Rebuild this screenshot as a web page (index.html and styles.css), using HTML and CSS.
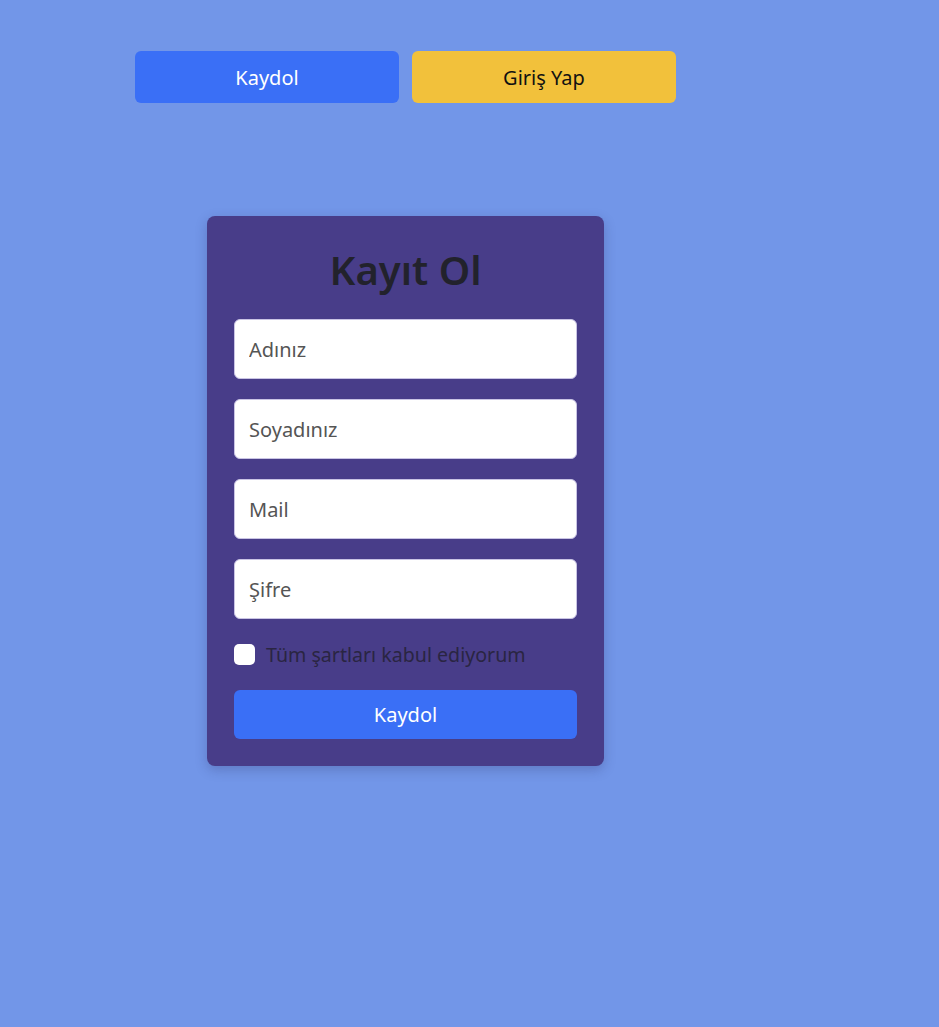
FILE: index.html
```html
<!DOCTYPE html>
<html lang="tr">
<head>
<meta charset="utf-8">
<title>Kayıt Ol</title>
<link rel="stylesheet" href="styles.css">
</head>
<body>
  <div class="topbar">
    <button class="tab tab-primary">Kaydol</button>
    <button class="tab tab-warning">Giriş Yap</button>
  </div>
  <form class="card">
    <h1 class="card-title">Kayıt Ol</h1>
    <input class="field" type="text" placeholder="Adınız">
    <input class="field" type="text" placeholder="Soyadınız">
    <input class="field" type="email" placeholder="Mail">
    <input class="field" type="password" placeholder="Şifre">
    <label class="check">
      <span class="box"></span>
      <span class="check-text">Tüm şartları kabul ediyorum</span>
    </label>
    <button class="submit" type="button">Kaydol</button>
  </form>
</body>
</html>
```

FILE: styles.css
```css
* { box-sizing: border-box; }
html, body { margin: 0; padding: 0; }
body {
  background: #7296e8;
  font-family: "Noto Sans", "Open Sans", sans-serif;
  min-height: 1027px;
}
.topbar {
  display: flex;
  gap: 13px;
  padding: 51px 0 0 135px;
}
.tab {
  width: 264px;
  height: 52px;
  border: none;
  border-radius: 6px;
  font-family: inherit;
  font-size: 20px;
  cursor: pointer;
}
.tab-primary { background: #3a6ff6; color: #fff; }
.tab-warning { background: #f2c13b; color: #111; }
.card {
  margin: 113px 0 0 207px;
  width: 397px;
  padding: 27px;
  background: #483d89;
  border-radius: 8px;
  box-shadow: 0 4px 12px rgba(40, 40, 90, 0.25);
  display: flex;
  flex-direction: column;
}
.card-title {
  margin: 0 0 22px;
  text-align: center;
  font-size: 40px;
  font-weight: 600;
  line-height: 54px;
  color: #22222c;
}
.field {
  height: 60px;
  width: 100%;
  margin-bottom: 20px;
  padding: 0 14px;
  border: 1px solid #c9c4e4;
  border-radius: 6px;
  background: #fff;
  font-family: inherit;
  font-size: 20px;
  color: #333;
}
.field::placeholder { color: #555; }
.check {
  display: flex;
  align-items: center;
  gap: 11px;
  height: 30px;
  margin: 0 0 21px;
}
.box {
  width: 21px;
  height: 21px;
  background: #fff;
  border-radius: 5px;
  flex: none;
}
.check-text {
  font-size: 19.6px;
  color: #2a2542;
}
.submit {
  height: 49px;
  width: 100%;
  border: none;
  border-radius: 6px;
  background: #3a6ff6;
  color: #fff;
  font-family: inherit;
  font-size: 20px;
}
```
